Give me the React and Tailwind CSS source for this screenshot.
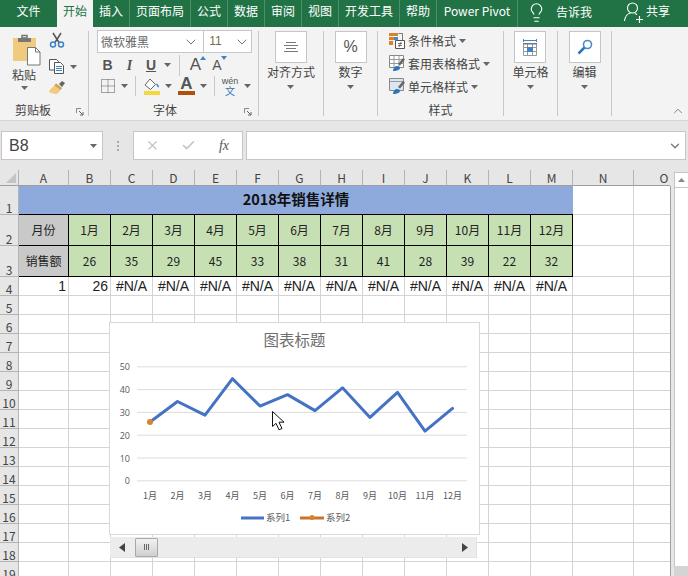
import { ChevronDown, ChevronUp, Lightbulb, X, Check } from 'lucide-react'

const tabs = [
  { label: '文件', w: 'w-[57px]' },
  { label: '开始', w: 'w-[36px]', active: true },
  { label: '插入', w: 'w-[37px]' },
  { label: '页面布局', w: 'w-[61px]' },
  { label: '公式', w: 'w-[37px]' },
  { label: '数据', w: 'w-[37px]' },
  { label: '审阅', w: 'w-[37px]' },
  { label: '视图', w: 'w-[37px]' },
  { label: '开发工具', w: 'w-[61px]' },
  { label: '帮助', w: 'w-[37px]' },
  { label: 'Power Pivot', w: 'w-[81px]' },
]

const columns = ['A', 'B', 'C', 'D', 'E', 'F', 'G', 'H', 'I', 'J', 'K', 'L', 'M', 'N', 'O']
const months = ['1月', '2月', '3月', '4月', '5月', '6月', '7月', '8月', '9月', '10月', '11月', '12月']
const sales = [26, 35, 29, 45, 33, 38, 31, 41, 28, 39, 22, 32]
const plainRows = [5, 6, 7, 8, 9, 10, 11, 12, 13, 14, 15, 16, 17, 18, 19]

const yahei = 'font-["Noto_Sans_CJK_SC",sans-serif]'

function Caret({ className = '' }) {
  return (
    <svg width="7" height="4" viewBox="0 0 7 4" className={`shrink-0 ${className}`}>
      <path d="M0 0h7L3.500 4z" fill="#666" />
    </svg>
  )
}

function Sep() {
  return <div className="w-px h-[85px] mt-[4px] bg-[#c8c8c8] shrink-0" />
}

function GroupLabel({ children }) {
  return <div className="h-[16px] leading-[16px] text-center text-[12px] text-[#444]">{children}</div>
}

function BigButton({ width, label, children }) {
  return (
    <div className={`${width} flex flex-col items-center shrink-0`}>
      <div className="h-[75px] flex flex-col items-center pt-[4px]">
        <div className="w-[32px] h-[32px] bg-white border border-[#c6c6c6] flex items-center justify-center">{children}</div>
        <div className="mt-[1px] h-[16px] leading-[16px] text-[12px] text-[#444] whitespace-nowrap">{label}</div>
        <Caret className="mt-[5px]" />
      </div>
    </div>
  )
}

function Launcher() {
  return (
    <svg width="8" height="8" viewBox="0 0 8 8" className="shrink-0">
      <path d="M.5 5V.5H5" fill="none" stroke="#888" />
      <path d="M3 3l4 4M7 4v3H4" fill="none" stroke="#666" />
    </svg>
  )
}

function PasteIcon() {
  return (
    <svg width="30" height="33" viewBox="0 0 30 33" className="shrink-0">
      <path d="M1 5h23v23H1z" fill="#f0ca7e" />
      <path d="M6 5h13V9H6z" fill="#777" />
      <path d="M10 2.500h5V5h-5z" fill="none" stroke="#777" strokeWidth="1.500" />
      <path d="M15.500 14.500h8l4.500 4.500v13H15.500z" fill="#fff" stroke="#777" />
      <path d="M23.500 14.500v4.500H28" fill="none" stroke="#777" />
    </svg>
  )
}

function ScissorsIcon() {
  return (
    <svg width="16" height="16" viewBox="0 0 16 16">
      <path d="M4 1l6 9.500M12 1L6 10.500" stroke="#555" strokeWidth="1.500" fill="none" />
      <circle cx="4" cy="12.500" r="2.500" fill="none" stroke="#3f83c8" strokeWidth="1.500" />
      <circle cx="12" cy="12.500" r="2.500" fill="none" stroke="#3f83c8" strokeWidth="1.500" />
    </svg>
  )
}

function CopyIcon() {
  return (
    <svg width="16" height="15" viewBox="0 0 16 15">
      <path d="M.5.500h7l2 2V11H.5z" fill="#fff" stroke="#555" />
      <path d="M5.500 3.500h6l3 3v8h-9z" fill="#fff" stroke="#555" />
      <path d="M7 7.500h6M7 9.500h6M7 11.500h6" stroke="#3f83c8" />
    </svg>
  )
}

function BrushIcon() {
  return (
    <svg width="17" height="16" viewBox="0 0 17 16">
      <path d="M10 4l3-3 3 2-3 4z" fill="#666" />
      <path d="M7 3.500l6 4.500-3 4-3 2.500-1-1-1 .5-1-1-1 .500-1-1-1 .500L0 11z" fill="#f0ca7e" />
      <path d="M7 3.500l6 4.500-1.500 2L5.500 5.500z" fill="#c9a55c" />
    </svg>
  )
}

function BordersIcon() {
  return (
    <svg width="14" height="14" viewBox="0 0 14 14">
      <path d="M.5.500h13v13H.5zM.5 7h13M7 .500v13" fill="none" stroke="#555" strokeDasharray="1 1" />
    </svg>
  )
}

function FillIcon() {
  return (
    <svg width="17" height="17" viewBox="0 0 17 17">
      <path d="M7 1l5.500 5.500L7.500 11.500 2 7z" fill="#fff" stroke="#666" />
      <path d="M13 5.500c2 .5 3 2 3 4-1 0-2.500-1.500-3-4z" fill="#3f83c8" />
      <path d="M1 13h16v4H1z" fill="#f5d742" />
    </svg>
  )
}

function FontColorIcon() {
  return (
    <div className="w-[17px] flex flex-col items-center">
      <span className="text-[17px] leading-[13px] font-bold text-[#555] font-['Liberation_Sans',sans-serif]">A</span>
      <div className="w-[17px] h-[4px] bg-[#b0500f] mt-px" />
    </div>
  )
}

function CondIcon() {
  return (
    <svg width="16" height="16" viewBox="0 0 16 16">
      <path d="M0 0h9v3H0z" fill="#d9812f" />
      <path d="M0 4h5v3H0zM0 8h4v4H0z" fill="#d9812f" />
      <path d="M5 4h4v3H5z" fill="#4a89c8" />
      <path d="M9.500.500h4v7" fill="none" stroke="#777" />
      <path d="M6.500 7.500h9v8h-9z" fill="#fff" stroke="#555" />
      <path d="M9 10.500h4M9 12.500h4M12 9l-2 5" stroke="#555" fill="none" strokeWidth=".8" />
    </svg>
  )
}

function TableStyleIcon({ plain }) {
  return (
    <svg width="17" height="17" viewBox="0 0 17 17">
      <path d="M.5.500h14v12H.5z" fill={plain ? '#dce6f1' : '#fff'} stroke="#888" />
      {!plain && <path d="M.5 4.500h14M.5 8.500h14M5 .500v12M10 .500v12" stroke="#999" fill="none" />}
      {plain && <path d="M.5 3.500h14" stroke="#999" />}
      <path d="M9 9l5-6 2 1.500-5 6z" fill="#666" />
      <path d="M4 16c0-3 2-5 4-5s3 1 3 2-2 3-7 3z" fill="#2f75b5" />
    </svg>
  )
}

function CellsIcon() {
  return (
    <svg width="16" height="18" viewBox="0 0 16 18">
      <path d="M1.500 1v3M14.500 1v3M2 2.500h12" stroke="#3f83c8" fill="none" />
      <path d="M1.500 5.500h13v12h-13zM1.500 9.500h13M1.500 13.500h13M5.500 5.500v12M10.500 5.500v12" fill="none" stroke="#999" />
      <path d="M1 5h14v1.500H1z" fill="#777" />
      <path d="M5 9h6v5H5z" fill="#3f83c8" />
    </svg>
  )
}

function SearchIcon() {
  return (
    <svg width="16" height="16" viewBox="0 0 16 16">
      <circle cx="10.500" cy="5.500" r="4" fill="none" stroke="#4a89c8" strokeWidth="1.600" />
      <path d="M7.500 8.500L1.500 14.500" stroke="#2f75b5" strokeWidth="2.500" />
    </svg>
  )
}

function PersonIcon() {
  return (
    <svg width="22" height="22" viewBox="0 0 22 22" fill="none" stroke="#fff" strokeWidth="1.100">
      <circle cx="9.500" cy="7" r="5" />
      <path d="M1.500 20c.5-4 3-7.500 6-8M12 12.500c.8.300 1.500.7 2 1.200M13 18.500h7M16.500 15v7" />
    </svg>
  )
}

function Ribbon() {
  return (
    <div className="flex h-[94px] bg-[#f3f3f3] border-b border-[#d4d4d4]">
      {/* Clipboard */}
      <div className="w-[88px] shrink-0">
        <div className="h-[75px] flex">
          <div className="w-[47px] flex flex-col items-start pl-[12px] pt-[6px]">
            <PasteIcon />
            <div className="text-[12px] leading-[16px] text-[#444] mt-px">粘贴</div>
            <Caret className="mt-[3px] ml-[9px]" />
          </div>
          <div className="flex flex-col pt-[5px] pl-[2px]">
            <div className="h-[23px]"><ScissorsIcon /></div>
            <div className="h-[23px] flex items-center gap-[5px]"><CopyIcon /><Caret /></div>
            <div className="h-[23px] pt-[2px]"><BrushIcon /></div>
          </div>
        </div>
        <div className="flex items-center">
          <div className="w-[66px]"><GroupLabel>剪贴板</GroupLabel></div>
          <div className="ml-[10px] mt-[4px]"><Launcher /></div>
        </div>
      </div>
      <Sep />

      {/* Font */}
      <div className="w-[169px] shrink-0 pl-[8px]">
        <div className="h-[75px] pt-[3px]">
          <div className="flex h-[23px] w-[155px] bg-white border border-[#c6c6c6] text-[12px] leading-[21px]">
            <div className="w-[106px] flex items-center justify-between pl-[3px] pr-[4px] border-r border-[#c6c6c6] text-[#666]">
              微软雅黑
              <ChevronDown size={16} strokeWidth={1.2} color="#555" />
            </div>
            <div className="flex-1 flex items-center justify-between pl-[2px] pr-[1px] text-[#7a6a50] font-['Liberation_Sans',sans-serif]">
              &nbsp;11
              <ChevronDown size={16} strokeWidth={1.2} color="#555" />
            </div>
          </div>
          <div className="flex items-center h-[22px] mt-[1px] text-[#555]">
            <span className="w-[21px] text-center text-[14px] font-bold font-['Liberation_Sans',sans-serif]">B</span>
            <span className="w-[23px] text-center text-[14px] italic font-bold font-['Liberation_Serif',serif]">I</span>
            <span className="w-[20px] text-center text-[14px] underline font-bold font-['Liberation_Sans',sans-serif]">U</span>
            <Caret className="ml-[3px]" />
            <div className="w-px h-[21px] bg-[#c8c8c8] ml-[8px]" />
            <div className="w-[31px] flex justify-center">
              <span className="relative text-[17px] leading-[20px] font-['Liberation_Sans',sans-serif]">
                A
                <svg width="6" height="4" viewBox="0 0 6 4" className="absolute -right-[5px] top-[1px]"><path d="M0 4h6L3 0z" fill="#3f83c8" /></svg>
              </span>
            </div>
            <div className="w-[12px] flex justify-center">
              <span className="relative text-[14px] leading-[20px] font-['Liberation_Sans',sans-serif]">
                A
                <svg width="6" height="4" viewBox="0 0 6 4" className="absolute -right-[5px] top-[1px]"><path d="M0 0h6L3 4z" fill="#3f83c8" /></svg>
              </span>
            </div>
          </div>
          <div className="flex items-center h-[22px] -mt-px">
            <div className="ml-[4px] w-[16px]"><BordersIcon /></div>
            <Caret className="ml-[4px]" />
            <div className="w-px h-[20px] bg-[#c8c8c8] ml-[7px]" />
            <div className="ml-[7px]"><FillIcon /></div>
            <Caret className="ml-[5px]" />
            <div className="ml-[6px]"><FontColorIcon /></div>
            <Caret className="ml-[5px]" />
            <div className="w-px h-[20px] bg-[#c8c8c8] ml-[7px]" />
            <div className="w-[26px] flex flex-col items-center ml-[2px]">
              <span className="block h-[10px] leading-[10px] text-[9px] text-[#555] font-['Liberation_Sans',sans-serif]">wén</span>
              <span className="block h-[10px] leading-[10px] text-[10px] text-[#2f75b5]">文</span>
            </div>
            <Caret className="ml-[1px]" />
          </div>
        </div>
        <div className="flex items-center">
          <div className="w-[136px]"><GroupLabel>字体</GroupLabel></div>
          <div className="ml-[11px] mt-[4px]"><Launcher /></div>
        </div>
      </div>
      <Sep />

      <BigButton width="w-[64px]" label="对齐方式">
        <svg width="14" height="11" viewBox="0 0 14 11"><path d="M2 .5h10M0 3.500h14M2 6.500h10M0 9.500h14" stroke="#777" /></svg>
      </BigButton>
      <Sep />

      <BigButton width="w-[53px]" label="数字">
        <span className="text-[16px] text-[#555] font-['Liberation_Sans',sans-serif]">%</span>
      </BigButton>
      <Sep />

      {/* Styles */}
      <div className="w-[125px] shrink-0">
        <div className="h-[75px] pt-[2px] pl-[11px] text-[12px] text-[#444]">
          <div className="h-[23px] flex items-center"><CondIcon /><span className="ml-[3px]">条件格式</span><Caret className="ml-[3px]" /></div>
          <div className="h-[23px] flex items-center"><TableStyleIcon /><span className="ml-[2px]">套用表格格式</span><Caret className="ml-[3px]" /></div>
          <div className="h-[23px] flex items-center"><TableStyleIcon plain /><span className="ml-[2px]">单元格样式</span><Caret className="ml-[3px]" /></div>
        </div>
        <GroupLabel>样式</GroupLabel>
      </div>
      <Sep />

      <BigButton width="w-[53px]" label="单元格"><CellsIcon /></BigButton>
      <Sep />

      <BigButton width="w-[53px]" label="编辑"><SearchIcon /></BigButton>
      <Sep />

      <div className="flex-1 flex justify-end items-end pr-[3px] pb-[2px]">
        <ChevronUp size={14} strokeWidth={1.2} color="#555" />
      </div>
    </div>
  )
}

function FormulaBar() {
  return (
    <div className="flex h-[49px] bg-[#e6e6e6] pt-[10px] pl-[1px] pr-[1px]">
      <div className="w-[102px] h-[29px] bg-white border border-[#c6c6c6] flex items-center justify-between pl-[7px] pr-[5px]">
        <span className="text-[16px] text-[#444] font-['Liberation_Sans',sans-serif]">B8</span>
        <Caret />
      </div>
      <div className="w-[30px] flex flex-col items-center justify-center gap-[2px] h-[29px]">
        <i className="block w-[2px] h-[2px] bg-[#aaa]" />
        <i className="block w-[2px] h-[2px] bg-[#aaa]" />
        <i className="block w-[2px] h-[2px] bg-[#aaa]" />
      </div>
      <div className="w-[110px] h-[29px] bg-white border border-[#c6c6c6] flex items-center">
        <div className="w-[26px] flex justify-end"><X size={15} strokeWidth={1.8} color="#c2c2c2" /></div>
        <div className="w-[36px] flex justify-end"><Check size={15} strokeWidth={2.4} color="#c2c2c2" /></div>
        <div className="w-[33px] text-right text-[14px] italic text-[#555] font-['Liberation_Serif',serif]">fx</div>
      </div>
      <div className="w-[440px] h-[29px] ml-[3px] bg-white border border-[#c6c6c6] flex items-center justify-end pr-[3px]">
        <ChevronDown size={14} strokeWidth={2.2} color="#777" />
      </div>
    </div>
  )
}

function Sheet() {
  const gridLine = 'border-r border-b border-[#d4d4d4]'
  const rowHead = 'flex items-end justify-center bg-[#e6e6e6] border-r border-b border-[#b4b4b4] text-[12px] leading-[12px] text-[#444] whitespace-nowrap'
  const headCell = 'flex items-center justify-center bg-[#e6e6e6] border-r border-b border-[#b4b4b4] border-b-[#9e9e9e] text-[12px] text-[#444]'
  const dataCell = 'flex items-center justify-center bg-[#c6e0b4] border-r border-b border-black text-[12px] text-[#222]'
  const labelCell = 'flex items-center justify-center bg-[#c9c9c9] border-r border-b border-black text-[12px] text-[#222]'
  const naCell = `flex items-center justify-center ${gridLine} text-[14px] text-[#222] font-['Liberation_Sans',sans-serif]`

  return (
    <div className="w-[670px] h-[406px] overflow-hidden shrink-0">
      <div className="grid grid-cols-[19px_50px_repeat(12,42px)_61px_61px] grid-rows-[16px_29px_31px_31px_repeat(16,19px)] w-[695px]">
        {/* Column headers */}
        <div className="bg-[#e6e6e6] border-r border-b border-[#b4b4b4] border-b-[#9e9e9e] flex items-end justify-end p-[2px]">
          <svg width="10" height="10" viewBox="0 0 10 10"><path d="M10 0v10H0z" fill="#c4c4c4" /></svg>
        </div>
        {columns.map(c => <div key={c} className={headCell}>{c}</div>)}

        {/* Row 1 */}
        <div className={rowHead}>1</div>
        <div className="col-span-13 flex items-center justify-center pb-[3px] bg-[#8ea9db] border-b border-black text-[14.5px] font-bold text-[#111]">2018年销售详情</div>
        <div className={gridLine} />
        <div className={gridLine} />

        {/* Row 2 */}
        <div className={rowHead}>2</div>
        <div className={labelCell}>月份</div>
        {months.map(m => <div key={m} className={dataCell}>{m}</div>)}
        <div className={gridLine} />
        <div className={gridLine} />

        {/* Row 3 */}
        <div className={rowHead}>3</div>
        <div className={labelCell}>销售额</div>
        {sales.map((s, i) => <div key={i} className={dataCell}>{s}</div>)}
        <div className={gridLine} />
        <div className={gridLine} />

        {/* Row 4 */}
        <div className={rowHead}>4</div>
        <div className={`flex items-center justify-end pr-[2px] ${gridLine} text-[14px] text-[#222] font-['Liberation_Sans',sans-serif]`}>1</div>
        <div className={`flex items-center justify-end pr-[2px] ${gridLine} text-[14px] text-[#222] font-['Liberation_Sans',sans-serif]`}>26</div>
        {sales.slice(1).map((_, i) => <div key={i} className={naCell}>#N/A</div>)}
        <div className={gridLine} />
        <div className={gridLine} />

        {plainRows.map(r => (
          <div key={r} className="contents">
            <div className={rowHead}>{r}</div>
            {columns.map(c => <div key={c} className={gridLine} />)}
          </div>
        ))}
      </div>
    </div>
  )
}

function VerticalScroll() {
  return (
    <div className="relative flex-1 bg-[#e6e6e6] pl-[4px] pt-[2px] flex flex-col">
      <div className="absolute left-0 top-[16px] bottom-0 w-px bg-[#a0a0a0]" />
      <div className="h-[394px] bg-white border-l border-t border-[#c6c6c6]">
        <div className="h-[15px] flex items-center justify-center border-b border-[#c6c6c6]">
          <svg width="7" height="4" viewBox="0 0 7 4"><path d="M0 4h7L3.500 0z" fill="#888" /></svg>
        </div>
      </div>
      <div className="flex-1 bg-[#d4d4d4]" />
    </div>
  )
}

function Chart() {
  const xs = sales.map((_, i) => 40 + i * 27.5)
  const yOf = v => 158.3 - v * 2.28
  const points = sales.map((v, i) => `${xs[i]},${yOf(v)}`).join(' ')
  const ticks = [0, 10, 20, 30, 40, 50]

  return (
    <div className="absolute left-[109px] top-[322px] w-[371px] h-[213px] bg-white border border-[#d9d9d9]">
      <svg width="369" height="211" viewBox="0 0 369 211" className="block font-['Noto_Sans_CJK_SC',sans-serif]">
        <text x="184.500" y="23" textAnchor="middle" fontSize="15.500" fill="#6e6e6e">图表标题</text>
        {ticks.map(t => (
          <g key={t}>
            <path d={`M27 ${yOf(t) - 0.5}H357`} stroke="#dcdcdc" strokeWidth="1" />
            <text x="20" y={yOf(t) + 3} textAnchor="end" fontSize="9" fill="#595959" fontFamily="'Open Sans',sans-serif">{t}</text>
          </g>
        ))}
        {months.map((m, i) => (
          <text key={m} x={xs[i]} y={176} textAnchor="middle" fontSize="9" fill="#595959">{m}</text>
        ))}
        <polyline points={points} fill="none" stroke="#4472c4" strokeWidth="3" strokeLinejoin="round" strokeLinecap="round" />
        <circle cx={xs[0]} cy={yOf(sales[0])} r="3" fill="#d9822b" />
        <path d="M131 195h23" stroke="#4472c4" strokeWidth="3" />
        <text x="156" y="198" fontSize="9.500" fill="#595959">系列1</text>
        <path d="M190 195h24" stroke="#c8752c" strokeWidth="3" />
        <circle cx="202" cy="194.500" r="2.500" fill="#d9822b" />
        <text x="216" y="198" fontSize="9.500" fill="#595959">系列2</text>
      </svg>
    </div>
  )
}

function ChartScroll() {
  return (
    <div className="absolute left-[110px] top-[537px] w-[367px] h-[21px] bg-[#ececec] border-b border-r border-[#e2e2e2] flex items-center">
      <svg width="6" height="9" viewBox="0 0 6 9" className="ml-[9px]"><path d="M6 0v9L0 4.500z" fill="#444" /></svg>
      <div className="ml-[10px] w-[23px] h-[19px] border border-[#a8a8a8] rounded-[1px] bg-gradient-to-b from-[#f2f2f2] to-[#cfcfcf] flex items-center justify-center gap-px">
        <i className="block w-px h-[6px] bg-[#666]" />
        <i className="block w-px h-[6px] bg-[#666]" />
        <i className="block w-px h-[6px] bg-[#666]" />
      </div>
      <svg width="6" height="9" viewBox="0 0 6 9" className="ml-auto mr-[8px]"><path d="M0 0v9l6-4.500z" fill="#444" /></svg>
    </div>
  )
}

export default function App() {
  return (
    <div className={`relative w-[688px] h-[576px] overflow-hidden bg-white ${yahei}`}>
      {/* Tabs */}
      <div className="flex h-[27px] bg-[#217346] text-[12px] text-white">
        {tabs.map((t, i) => (
          <div
            key={t.label}
            className={`${t.w} shrink-0 flex items-center justify-center whitespace-nowrap pb-[5px] ${t.active ? 'bg-[#f3f3f3] text-[#217346]' : ''} ${i > 1 ? 'border-r border-[#4c9069]' : ''}`}
          >
            {t.label}
          </div>
        ))}
        <div className="ml-[8px] flex items-center pb-[3px]"><Lightbulb size={21} strokeWidth={1.3} /></div>
        <div className="ml-[9px] flex items-center pb-[4px]">告诉我</div>
        <div className="ml-[31px] flex items-center pb-[3px]"><PersonIcon /></div>
        <div className="ml-[1px] flex items-center pb-[6px]">共享</div>
      </div>

      <Ribbon />
      <FormulaBar />

      <div className="flex h-[406px]">
        <Sheet />
        <VerticalScroll />
      </div>

      <Chart />
      <ChartScroll />

      {/* Mouse pointer */}
      <svg width="13" height="20" viewBox="0 0 13 20" className="absolute left-[272px] top-[411px]">
        <path d="M.5.500v15l3.500-3.200 3 6.500 3-1.300-3-6.300h5z" fill="#fff" stroke="#111" />
      </svg>
    </div>
  )
}
